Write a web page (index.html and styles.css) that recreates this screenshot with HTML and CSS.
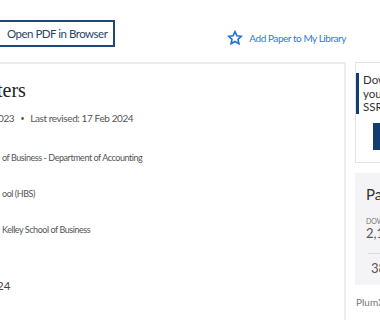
FILE: index.html
```html
<!DOCTYPE html>
<html lang="en">
<head>
    <meta charset="UTF-8">
    <meta name="viewport" content="width=device-width, initial-scale=1.0">
    <title>Paper page</title>
    <link rel="stylesheet" href="styles.css">
</head>
<body>

<div class="page">
    <div class="main">
        <div class="toolbar">
            <button class="open-pdf">Open PDF in Browser</button>
            <a class="add-library" href="#">
                <svg width="16" height="16" viewBox="0 0 24 24">
                    <path d="M12 2.5l2.9 6.2 6.6.7-5 4.6 1.4 6.6L12 17.3l-5.9 3.3 1.4-6.6-5-4.6 6.6-.7z" fill="none" stroke="#1f6fd1" stroke-width="2.4" stroke-linejoin="miter"/>
                </svg>
                Add Paper to My Library
            </a>
        </div>

        <div class="paper">
            <h1 class="title">ters</h1>
            <div class="dates">023 <span class="dot">&bull;</span> Last revised: 17 Feb 2024</div>

            <div class="affil first">of Business - Department of Accounting</div>
            <div class="affil">ool (HBS)</div>
            <div class="affil">Kelley School of Business</div>

            <div class="abstract-date">24</div>
        </div>
    </div>

    <div class="side">
        <div class="promo">
            <div class="promo-text">Download this paper<br>you can save on<br>SSRN</div>
            <button class="promo-btn">Download</button>
        </div>

        <div class="stats">
            <div class="stats-title">Paper statistics</div>
            <div class="stat-label">Downloads</div>
            <div class="stat-value">2,107</div>
            <div class="stat-row">381</div>
        </div>

        <div class="plumx">PlumX Metrics</div>
    </div>
</div>

</body>
</html>
```

FILE: styles.css
```css
body {
    margin: 0;
    font-family: Lato, "Open Sans", sans-serif;
    background-color: #fff;
    overflow: hidden;
}

.page {
    display: flex;
    gap: 9px;
    width: 600px;
}

.main {
    flex: 0 0 348px;
    margin-left: -2px;
}

.toolbar {
    display: flex;
    justify-content: space-between;
    align-items: flex-start;
    height: 42px;
    padding-top: 20px;
}

.open-pdf {
    margin-left: -20px;
    height: 27px;
    width: 137px;
    padding: 0 0 0 27px;
    text-align: left;
    white-space: nowrap;
    background-color: #fff;
    border: 2px solid #1f4878;
    color: #2a4468;
    font-family: Lato, sans-serif;
    font-size: 11.5px;
    letter-spacing: -0.5px;
}

.add-library {
    display: flex;
    align-items: center;
    gap: 6px;
    margin-top: 10px;
    color: #2f7bd4;
    font-size: 10px;
    letter-spacing: -0.45px;
    text-decoration: none;
}

.paper {
    height: 300px;
    border: 2px solid #ecedf1;
    padding: 14px 0 0 2px;
}

.title {
    margin: 0 0 0 -5px;
    font-family: "Liberation Serif", serif;
    font-weight: normal;
    font-size: 20px;
    line-height: 24px;
    color: #222;
}

.dates {
    margin-top: 9px;
    margin-left: -4px;
    font-size: 10px;
    letter-spacing: -0.4px;
    line-height: 14px;
    color: #555;
}

.dot {
    margin: 0 4px;
    font-size: 7px;
    vertical-align: 1px;
}

.affil {
    margin-top: 24px;
    font-size: 9px;
    letter-spacing: -0.45px;
    line-height: 12px;
    color: #555;
}

.affil.first {
    margin-top: 27px;
}

.abstract-date {
    margin-top: 43px;
    margin-left: -5px;
    font-size: 11.5px;
    line-height: 14px;
    color: #444;
}

.side {
    flex: 0 0 200px;
    padding-top: 62px;
}

.promo {
    height: 99px;
    border: 1px solid #e3e4e8;
}

.promo-text {
    margin-top: 10px;
    padding-left: 4px;
    border-left: 3px solid #123d6f;
    font-size: 11.5px;
    line-height: 13.5px;
    color: #333;
}

.promo-btn {
    display: block;
    margin: 9px 0 0 17px;
    width: 150px;
    height: 27px;
    border: none;
    background-color: #123d6f;
    color: #fff;
}

.stats {
    margin-top: 10px;
    height: 112px;
    padding: 12px 0 0 11px;
    box-sizing: border-box;
    background-color: #f4f4f6;
}

.stats-title {
    font-size: 15px;
    line-height: 18px;
    color: #333;
}

.stat-label {
    margin-top: 14px;
    font-size: 7px;
    text-transform: uppercase;
    color: #777;
}

.stat-value {
    font-size: 13px;
    line-height: 16px;
    color: #555;
}

.stat-row {
    margin-top: 12px;
    margin-left: 2px;
    padding: 6px 0 0 3px;
    border-top: 1px solid #dcdce0;
    font-size: 13px;
    color: #555;
}

.plumx {
    margin-top: 11px;
    padding-left: 1px;
    font-size: 10px;
    color: #777;
}
```
